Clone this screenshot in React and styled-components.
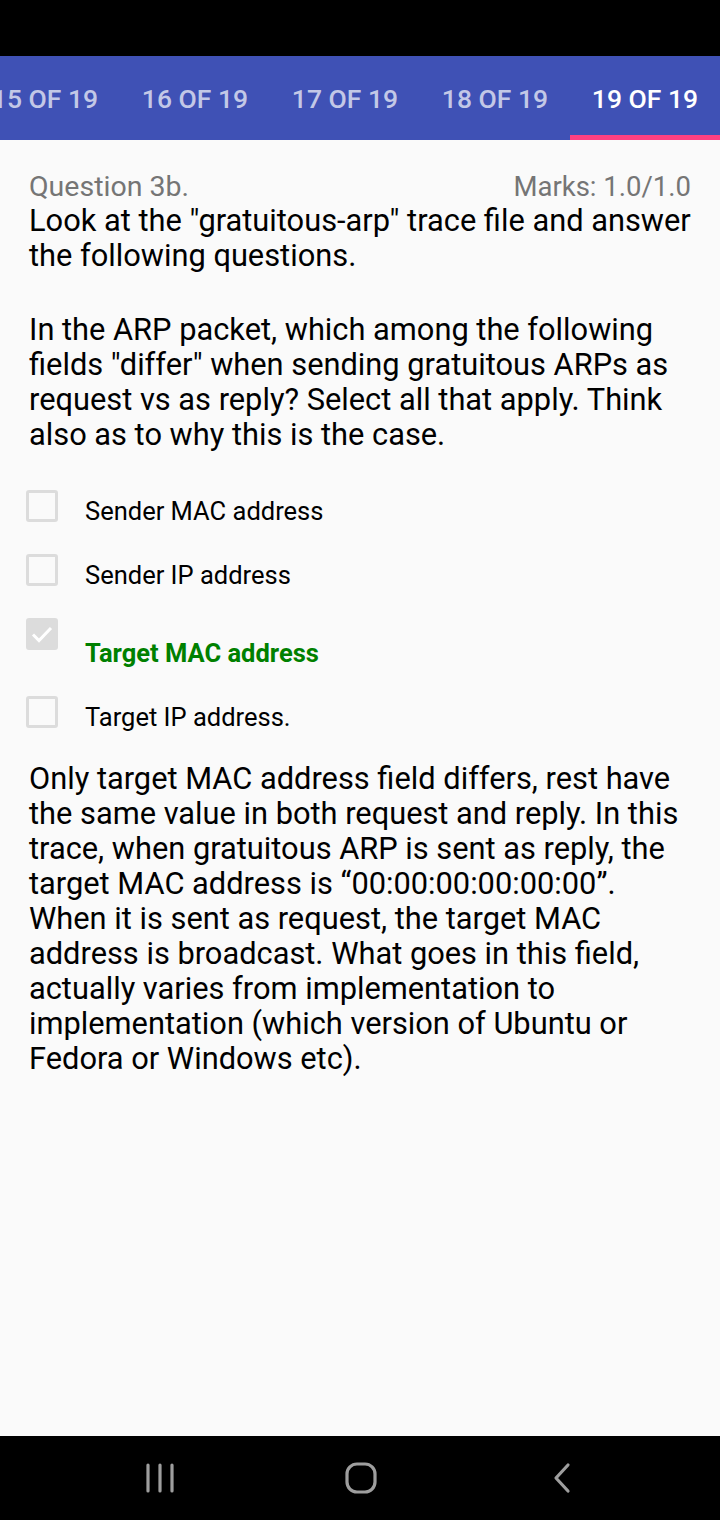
import React from "react";
import styled, { createGlobalStyle } from "styled-components";

const Global = createGlobalStyle`
  html, body { margin: 0; padding: 0; background: #fafafa; }
  body { font-family: Roboto, "Noto Sans", sans-serif; }
`;

const Screen = styled.div`
  width: 720px;
  height: 1520px;
  display: flex;
  flex-direction: column;
  background: #fafafa;
  overflow: hidden;
`;

const StatusBar = styled.div`
  height: 56px;
  background: #000;
  flex-shrink: 0;
`;

const TabBar = styled.div`
  height: 84px;
  background: #3f51b5;
  display: flex;
  flex-shrink: 0;
  margin-left: -30px;
`;

const Tab = styled.div`
  width: 150px;
  flex-shrink: 0;
  display: flex;
  align-items: center;
  justify-content: center;
  position: relative;
  padding-top: 1px;
  font-size: 26.5px;
  font-weight: 500;
  color: ${(p) => (p.active ? "#ffffff" : "rgba(255,255,255,0.7)")};
  &::after {
    content: "";
    position: absolute;
    left: 0;
    right: 0;
    bottom: 0;
    height: 5px;
    background: ${(p) => (p.active ? "#ff4081" : "transparent")};
  }
`;

const Content = styled.div`
  flex: 1;
  padding: 30px 29px 0 29px;
`;

const Header = styled.div`
  display: flex;
  justify-content: space-between;
  align-items: baseline;
  font-size: 28.5px;
  color: #757575;
  line-height: 33px;
`;

const Marks = styled.span`
  font-size: 27.5px;
`;

const Prompt = styled.div`
  font-size: 30.8px;
  line-height: 35px;
  color: #000;
`;

const Gap = styled.div`
  height: 39px;
`;

const Options = styled.div`
  display: flex;
  flex-direction: column;
  margin: 38px 0 0 -3px;
`;

const Option = styled.div`
  display: flex;
  align-items: flex-start;
  height: ${(p) => (p.tall ? "78px" : "64px")};
`;

const Box = styled.div`
  width: 26px;
  height: 26px;
  border: 3px solid #dcdcdc;
  border-radius: 3px;
  background: ${(p) => (p.checked ? "#dcdcdc" : "transparent")};
  display: flex;
  align-items: center;
  justify-content: center;
  flex-shrink: 0;
`;

const Label = styled.div`
  margin-left: 27px;
  font-size: 25.5px;
  line-height: 30px;
  padding-top: ${(p) => (p.shift ? "20px" : "6px")};
  color: ${(p) => (p.correct ? "#008000" : "#000")};
  font-weight: ${(p) => (p.correct ? 700 : 400)};
`;

const Feedback = styled.div`
  margin-top: 1px;
  font-size: 30.8px;
  line-height: 35px;
  color: #000;
`;

const NavBar = styled.div`
  height: 84px;
  background: #000;
  flex-shrink: 0;
  display: flex;
  align-items: center;
  gap: 141px;
  padding-left: 130px;
`;

const NavBtn = styled.div`
  width: 60px;
  display: flex;
  justify-content: center;
`;

const tabs = ["15 OF 19", "16 OF 19", "17 OF 19", "18 OF 19", "19 OF 19"];

const options = [
  { text: "Sender MAC address" },
  { text: "Sender IP address" },
  { text: "Target MAC address", checked: true, correct: true },
  { text: "Target IP address." },
];

export default function App() {
  return (
    <Screen>
      <Global />
      <StatusBar />
      <TabBar>
        {tabs.map((t, i) => (
          <Tab key={t} active={i === tabs.length - 1}>
            {t}
          </Tab>
        ))}
      </TabBar>
      <Content>
        <Header>
          <span>Question 3b.</span>
          <Marks>Marks: 1.0/1.0</Marks>
        </Header>
        <Prompt>
          Look at the "gratuitous-arp" trace file and answer the following questions.
          <Gap />
          In the ARP packet, which among the following fields "differ" when sending
          gratuitous ARPs as request vs as reply? Select all that apply. Think also as
          to why this is the case.
        </Prompt>
        <Options>
          {options.map((o) => (
            <Option key={o.text} tall={o.correct}>
              <Box checked={o.checked}>
                {o.checked && (
                  <svg width="24" height="24" viewBox="0 0 24 24">
                    <path d="M3 12.5l6 6L21 6" fill="none" stroke="#fff" strokeWidth="3" />
                  </svg>
                )}
              </Box>
              <Label correct={o.correct} shift={o.correct}>
                {o.text}
              </Label>
            </Option>
          ))}
        </Options>
        <Feedback>
          Only target MAC address field differs, rest have the same value in both
          request and reply. In this trace, when gratuitous ARP is sent as reply, the
          target MAC address is “00:00:00:00:00:00”. When it is sent as request, the
          target MAC address is broadcast. What goes in this field, actually varies
          from implementation to implementation (which version of Ubuntu or Fedora or
          Windows etc).
        </Feedback>
      </Content>
      <NavBar>
        <NavBtn>
          <svg width="30" height="30" viewBox="0 0 30 30">
            <g stroke="#9e9e9e" strokeWidth="3.2" strokeLinecap="round">
              <line x1="3" y1="2" x2="3" y2="28" />
              <line x1="15" y1="2" x2="15" y2="28" />
              <line x1="27" y1="2" x2="27" y2="28" />
            </g>
          </svg>
        </NavBtn>
        <NavBtn>
          <svg width="32" height="32" viewBox="0 0 32 32">
            <rect x="2" y="2" width="28" height="28" rx="10" fill="none" stroke="#9e9e9e" strokeWidth="3.2" />
          </svg>
        </NavBtn>
        <NavBtn>
          <svg width="20" height="32" viewBox="0 0 20 32">
            <path d="M16 3L4 16l12 13" fill="none" stroke="#9e9e9e" strokeWidth="3.2" strokeLinecap="round" strokeLinejoin="round" />
          </svg>
        </NavBtn>
      </NavBar>
    </Screen>
  );
}
